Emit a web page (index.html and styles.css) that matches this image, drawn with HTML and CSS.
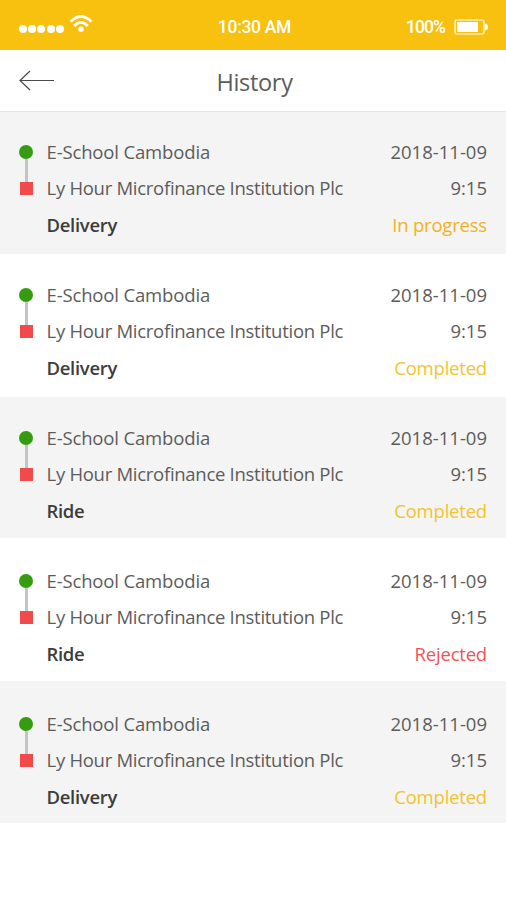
FILE: index.html
```html
<!DOCTYPE html>
<html lang="en">
<head>
	<meta charset="UTF-8">
	<title>History</title>
	<link rel="stylesheet" href="styles.css">
</head>
<body>
	<div class="status">
		<div class="signal">
			<i></i><i></i><i></i><i></i><i></i>
			<svg class="wifi" width="24" height="20" viewBox="0 0 24 20" fill="none" stroke="#fff" stroke-width="2.8">
				<path d="M1.6 7.6Q12 -2.6 22.4 7.6"/>
				<path d="M5.2 12Q12 4.6 18.8 12"/>
				<circle cx="12" cy="15.2" r="2.7" fill="#fff" stroke="none"/>
			</svg>
		</div>
		<div class="clock">10:30 AM</div>
		<div class="power">
			<span class="percent">100%</span>
			<svg width="35" height="16" viewBox="0 0 35 16">
				<rect x="1" y="1" width="29" height="14" rx="2" fill="none" stroke="#fff" stroke-opacity=".7" stroke-width="1.6"/>
				<rect x="3" y="3" width="21" height="10" fill="#fff"/>
				<path d="M31 4.5Q34 5 34 8T31 11.5z" fill="#fff"/>
			</svg>
		</div>
	</div>
	<div class="header">
		<svg class="back" width="36" height="22" viewBox="0 0 36 22" fill="none" stroke="#4a4a4a" stroke-width="1.2">
			<path d="M35 10.5H1"/>
			<path d="M11 1L1 10.5L11 20"/>
		</svg>
		<h1>History</h1>
	</div>
	<ul class="list">
		<li class="item">
			<div class="route"><b class="from"></b><b class="line"></b><b class="to"></b></div>
			<div class="info">
				<p class="school">E-School Cambodia</p>
				<p class="bank">Ly Hour Microfinance Institution Plc</p>
				<p class="type">Delivery</p>
			</div>
			<div class="state">
				<p class="date">2018-11-09</p>
				<p class="time">9:15</p>
				<p class="result progress">In progress</p>
			</div>
		</li>
		<li class="item">
			<div class="route"><b class="from"></b><b class="line"></b><b class="to"></b></div>
			<div class="info">
				<p class="school">E-School Cambodia</p>
				<p class="bank">Ly Hour Microfinance Institution Plc</p>
				<p class="type">Delivery</p>
			</div>
			<div class="state">
				<p class="date">2018-11-09</p>
				<p class="time">9:15</p>
				<p class="result completed">Completed</p>
			</div>
		</li>
		<li class="item">
			<div class="route"><b class="from"></b><b class="line"></b><b class="to"></b></div>
			<div class="info">
				<p class="school">E-School Cambodia</p>
				<p class="bank">Ly Hour Microfinance Institution Plc</p>
				<p class="type">Ride</p>
			</div>
			<div class="state">
				<p class="date">2018-11-09</p>
				<p class="time">9:15</p>
				<p class="result completed">Completed</p>
			</div>
		</li>
		<li class="item">
			<div class="route"><b class="from"></b><b class="line"></b><b class="to"></b></div>
			<div class="info">
				<p class="school">E-School Cambodia</p>
				<p class="bank">Ly Hour Microfinance Institution Plc</p>
				<p class="type">Ride</p>
			</div>
			<div class="state">
				<p class="date">2018-11-09</p>
				<p class="time">9:15</p>
				<p class="result rejected">Rejected</p>
			</div>
		</li>
		<li class="item">
			<div class="route"><b class="from"></b><b class="line"></b><b class="to"></b></div>
			<div class="info">
				<p class="school">E-School Cambodia</p>
				<p class="bank">Ly Hour Microfinance Institution Plc</p>
				<p class="type">Delivery</p>
			</div>
			<div class="state">
				<p class="date">2018-11-09</p>
				<p class="time">9:15</p>
				<p class="result completed">Completed</p>
			</div>
		</li>
	</ul>
</body>
</html>
```

FILE: styles.css
```css
*{
	margin: 0;
	padding: 0;
	box-sizing: border-box;
}
body{
	background: #fff;
	color: #5c5c5c;
	font-family: "Open Sans", "Noto Sans", sans-serif;
	font-size: 18.5px;
}
/* status bar */
.status{
	display: grid;
	grid-template-columns: 1fr auto 1fr;
	align-items: center;
	height: 50px;
	padding: 4px 17px 0 19px;
	background: #f8c110;
	color: #fff;
	font-family: Roboto, sans-serif;
	font-size: 17.5px;
	font-weight: 500;
}
.signal{
	display: flex;
	align-items: center;
	gap: 1.2px;
}
.signal i{
	width: 8px;
	height: 8px;
	margin-top: 4px;
	border-radius: 50%;
	background: #fff;
}
.wifi{
	margin: -6px 0 0 4px;
}
.clock{
	padding-left: 1px;
	letter-spacing: -.3px;
}
.power{
	display: flex;
	justify-content: flex-end;
	align-items: center;
	gap: 9px;
}
.percent{
	letter-spacing: -.9px;
}
/* title bar */
.header{
	display: grid;
	grid-template-columns: 1fr auto 1fr;
	align-items: center;
	height: 62px;
	padding: 0 19px;
	border-bottom: 1px solid #e6e6e6;
}
.header h1{
	padding: 3px 0 0 3px;
	font-size: 23.5px;
	font-weight: 400;
	line-height: 32px;
	letter-spacing: -.3px;
}
/* trips */
.list{
	list-style: none;
}
.item{
	display: flex;
	height: 143px;
	padding: 22px 19px 0;
	line-height: 36px;
}
.item:nth-child(odd){
	background: #f4f4f4;
}
.item:nth-child(1){
	height: 142px;
}
.item:nth-child(2),
.item:nth-child(3){
	padding-top: 23px;
}
.item:nth-child(3){
	height: 141px;
}
.item:nth-child(4),
.item:nth-child(5){
	padding-top: 25px;
}
.item:nth-child(5){
	height: 142px;
}
.route{
	display: flex;
	flex-direction: column;
	align-items: center;
	width: 14px;
	margin: 11px 13.5px 0 0;
}
.from{
	width: 14px;
	height: 14px;
	border-radius: 50%;
	background: #359c10;
}
.line{
	width: 3px;
	height: 23px;
	background: #c4c4c4;
}
.to{
	width: 13px;
	height: 13px;
	background: #f04a4a;
}
.info{
	flex: 1;
	white-space: nowrap;
}
.school{
	letter-spacing: -.15px;
}
.bank{
	letter-spacing: -.28px;
}
.state{
	text-align: right;
}
.type,
.result{
	line-height: 38px;
}
.type{
	color: #3c3c3c;
	font-weight: 600;
	letter-spacing: -.3px;
}
.result{
	letter-spacing: -.2px;
}
.progress{
	color: #f3b221;
}
.completed{
	color: #f3c330;
}
.rejected{
	color: #ee5458;
}
```
